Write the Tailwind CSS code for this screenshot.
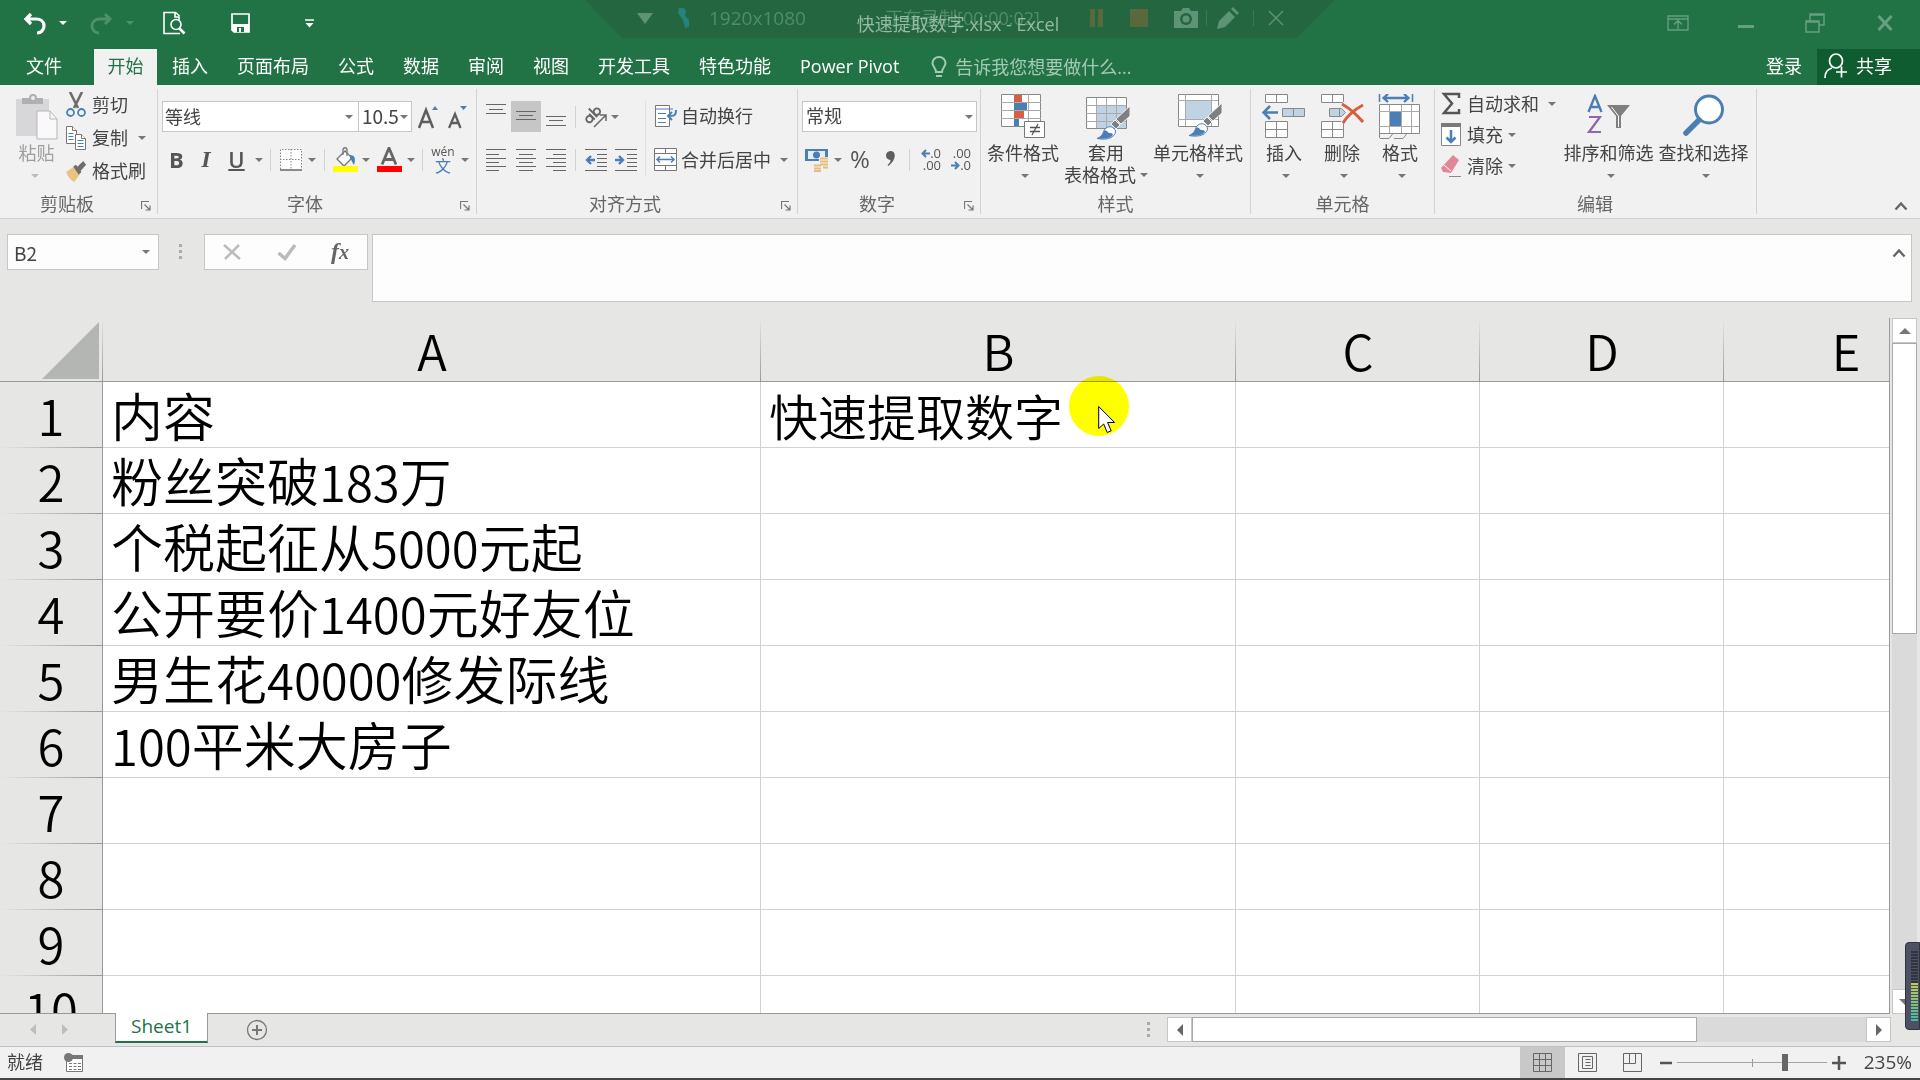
<!DOCTYPE html>
<html lang="zh-CN">
<head>
<meta charset="utf-8">
<title>快速提取数字.xlsx - Excel</title>
<script src="https://cdn.jsdelivr.net/npm/@tailwindcss/browser@4"></script>
</head>
<body class="flex h-screen flex-col overflow-hidden bg-[#e6e6e5] font-['Open_Sans','Noto_Sans_CJK_SC',sans-serif] text-lg leading-5 text-[#444]">

<!-- shared symbols -->
<svg class="hidden">
  <symbol id="dn" viewBox="0 0 8 4"><path d="M0 0h8L4 4z" fill="currentColor"/></symbol>
  <symbol id="launch" viewBox="0 0 10 10"><path d="M.5 8V.5H8M3.5 3.5l5 5M9 4.5V9H4.5" fill="none" stroke="#777" stroke-width="1.2"/></symbol>
  <symbol id="brush" viewBox="0 0 34 34"><path d="M34 0v10l-9 8-5-5z" fill="#7f7f7f" stroke="#f1f1f1"/><path d="M19 14l5 5-4 4-5-5z" fill="#7f7f7f" stroke="#f1f1f1"/><path d="M1 32.500c5-2 6-5 7-8 2-4 7-5 10-2s1 7-3 9c-4 2-9 2-14 1z" fill="#fff" stroke="#4a7fb5"/><path d="M1 32.500c5-2 6-5 7-8 2 0 3 0 4 2 2 1 4 0 5 2-1 3-7 5-16 4z" fill="#4a7fb5"/></symbol>
</svg>

<!-- title bar -->
<header class="relative flex h-[49px] shrink-0 items-start bg-[#217346] text-white">
  <nav class="flex items-center pt-[11px] pl-[23px]" aria-label="快速访问工具栏">
    <button aria-label="撤消" class="w-6"><svg viewBox="0 0 24 24" class="size-6"><path d="M8 3L3 8l5 5M3 8h10c5 0 8 3 8 7s-3 7-7 7" fill="none" stroke="#fff" stroke-width="3.2"/></svg></button>
    <button aria-label="撤消列表" class="ml-[12px]"><svg class="h-1 w-2"><use href="#dn"/></svg></button>
    <button aria-label="重做" class="ml-[22px] w-6 text-[#4d9069]"><svg viewBox="0 0 24 24" class="size-6"><path d="M16 3l5 5-5 5M21 8H11c-5 0-8 3-8 7s3 7 7 7" fill="none" stroke="currentColor" stroke-width="3"/></svg></button>
    <button aria-label="重做列表" class="ml-[13px] text-[#4d9069]"><svg class="h-1 w-2"><use href="#dn"/></svg></button>
    <button aria-label="打印预览" class="ml-[28px]"><svg viewBox="0 0 24 24" class="size-6" fill="none" stroke="#fff" stroke-width="1.6"><path d="M17 5v-.5L13.500 1.500H2v21h16M13 2v4h4v3"/><circle cx="14" cy="13.500" r="5"/><path d="M17.500 17.500l5 5" stroke-width="2.600"/></svg></button>
    <button aria-label="保存" class="ml-[44px]"><svg viewBox="0 0 22 22" class="size-[22px]"><path d="M2 2h17v18H4l-2-2z" fill="none" stroke="#fff" stroke-width="1.700"/><path d="M2 12h17v8H4l-2-2z" fill="#fff"/><path d="M7 15h7v5H7z" fill="#217346"/><path d="M9 16h2v4H9z" fill="#fff"/></svg></button>
    <button aria-label="自定义快速访问工具栏" class="ml-[53px]"><svg viewBox="0 0 9 9" class="size-[9px]"><path d="M0 1h9" stroke="#fff" stroke-width="1.500"/><path d="M.5 4h8L4.500 8.500z" fill="#fff"/></svg></button>
  </nav>

  <!-- screen recorder strip laid over the title -->
  <div class="absolute inset-x-0 top-0 flex justify-center">
    <div class="flex h-[38px] w-[750px] items-center bg-[#24663f] pb-[2px] pl-[52px] text-[#518d69] [clip-path:polygon(0_0,100%_0,712px_100%,37px_100%)]">
      <svg viewBox="0 0 16 11" class="h-[11px] w-4"><path d="M0 0h16L8 11z" fill="#5d9475"/></svg>
      <svg viewBox="0 0 18 20" class="ml-[22px] h-5 w-[18px]"><path d="M4 0h5l2 3-1 5 4 4v7l-4 1-2-8-5-7z" fill="#25837e"/></svg>
      <span class="ml-[16px] w-[176px] text-[19px]">1920x1080</span>
      <span class="w-[200px] whitespace-nowrap">正在录制[00:00:02]</span>
      <svg viewBox="0 0 14 18" class="ml-[5px] h-[18px] w-[14px]"><path d="M0 0h5v18H0zM8 0h5v18H8z" fill="#59693c"/></svg>
      <svg viewBox="0 0 18 18" class="ml-[26px] size-[18px]"><path d="M0 0h18v18H0z" fill="#59693c"/></svg>
      <svg viewBox="0 0 24 20" class="ml-[26px] h-5 w-6"><path d="M7 3l2-3h6l2 3h7v17H0V3z" fill="#5d9475"/><circle cx="12" cy="11" r="6" fill="#24663f"/><circle cx="12" cy="11" r="3.500" fill="#5d9475"/></svg>
      <i class="ml-[8px] h-4 w-px bg-[#3b7a56]"></i>
      <svg viewBox="0 0 22 22" class="ml-[10px] size-[22px]"><path d="M0 22l2-8L12 4l6 6L8 20zM14 2l2-2 6 6-2 2z" fill="#5d9475"/></svg>
      <i class="ml-[14px] h-4 w-px bg-[#3b7a56]"></i>
      <svg viewBox="0 0 16 16" class="ml-[14px] size-4"><path d="M1 1l14 14M15 1L1 15" stroke="#5d9475" stroke-width="1.400"/></svg>
    </div>
  </div>
  <h1 class="absolute inset-x-0 top-[14px] pr-1 text-center text-[#94bba3]">快速提取数字.xlsx - Excel</h1>

  <div class="relative ml-auto flex items-center pt-[12px] pr-[27px] text-[#67a080]">
    <button aria-label="功能区显示选项"><svg viewBox="0 0 22 16" class="h-4 w-[22px]" fill="none" stroke="currentColor" stroke-width="1.300"><path d="M1 1h20v14H1zM1 4h20M11 14V6M7 9.500l4-4 4 4"/></svg></button>
    <button aria-label="最小化" class="ml-[49px] pt-2"><svg viewBox="0 0 16 4" class="h-1 w-4"><path d="M0 0h16v3H0z" fill="currentColor"/></svg></button>
    <button aria-label="还原" class="ml-[51px]"><svg viewBox="0 0 20 22" class="h-[22px] w-5" fill="none" stroke="currentColor" stroke-width="1.500"><path d="M1 9h13v11H1zM1 10h13M5 9V2h14v11h-5M5 3h14"/></svg></button>
    <button aria-label="关闭" class="ml-[52px]"><svg viewBox="0 0 16 16" class="size-4"><path d="M1.500 1l13 14M14.500 1l-13 14" stroke="currentColor" stroke-width="3"/></svg></button>
  </div>
</header>

<!-- ribbon tabs -->
<nav class="flex h-9 shrink-0 items-center bg-[#217346] pl-[26px] whitespace-nowrap text-white">
  <a href="#" class="w-[68px] pb-[2px]">文件</a>
  <a href="#" class="flex h-9 w-[63px] items-center justify-center bg-[#f1f1f1] pb-[2px] text-[#217346]">开始</a>
  <div class="ml-[15px] flex gap-[29px] pb-[2px]">
    <a href="#">插入</a><a href="#">页面布局</a><a href="#">公式</a><a href="#">数据</a><a href="#">审阅</a><a href="#">视图</a><a href="#">开发工具</a><a href="#">特色功能</a><a href="#">Power Pivot</a>
  </div>
  <button class="ml-[32px] flex items-center gap-2 text-[#a5cab4]">
    <svg viewBox="0 0 16 22" class="h-[22px] w-4" fill="none" stroke="currentColor" stroke-width="2"><path d="M5 16c0-4-3.500-5-3.500-9a6.500 6 0 0 1 13 0c0 4-3.500 5-3.500 9zM5 20h6"/></svg>
    <span>告诉我您想要做什么...</span>
  </button>
  <a href="#" class="ml-auto pb-[2px]">登录</a>
  <button class="ml-[15px] flex h-9 w-[103px] items-center gap-2 bg-[#0e5c2f] pb-[2px] pl-[7px]">
    <svg viewBox="0 0 24 26" class="h-[26px] w-6" fill="none" stroke="#fff" stroke-width="1.700"><ellipse cx="12" cy="8" rx="6.500" ry="7"/><path d="M1 25c0-6 3-9 7-10M12 19h11M17.500 13.500v11"/></svg>
    <span>共享</span>
  </button>
</nav>

<!-- ribbon -->
<section class="flex h-[134px] shrink-0 border-b border-[#cfcfcf] bg-[#f1f1f1] whitespace-nowrap">

  <div class="my-1 flex w-[158px] shrink-0 flex-col border-r border-[#d2d2d2]">
    <div class="flex h-[105px] pl-[15px]">
      <button class="flex w-[43px] flex-col pt-[5px] text-[#9e9e9e]">
        <svg viewBox="0 0 43 46" class="h-[46px] w-[43px]"><path d="M1 5h33v37H1z" fill="#d7d7d9"/><path d="M7 4h7a4 4 0 0 1 8 0h6v6H7z" fill="#b0b0b2"/><circle cx="18" cy="4" r="2" fill="#eee"/><path d="M22 17h13l7 8v20H22z" fill="#faf8fa" stroke="#b5b5b5"/><path d="M35 17v8h7" fill="none" stroke="#b5b5b5"/></svg>
        <span class="mt-[3px]">粘贴</span>
        <svg class="mt-[11px] ml-4 h-1 w-2 text-[#bbb]"><use href="#dn"/></svg>
      </button>
      <div class="ml-2 flex flex-col gap-[13px] pt-[6px]">
        <button class="flex h-5 items-center gap-[6px]"><svg viewBox="0 0 20 26" class="h-[26px] w-5" fill="none"><path d="M4 0l8 16M16 0L8 16" stroke="#6d6d6d" stroke-width="2.600"/><circle cx="4.500" cy="20.500" r="3.500" stroke="#4a7fb5" stroke-width="1.800"/><circle cx="15.500" cy="20.500" r="3.500" stroke="#4a7fb5" stroke-width="1.800"/></svg>剪切</button>
        <button class="flex h-5 items-center gap-[6px]"><svg viewBox="0 0 20 26" class="h-[26px] w-5" fill="#fff" stroke="#777"><path d="M.5 1.500h6l4 4v13H.5z"/><path d="M6.500 1.500v4h4" /><path d="M9.500 9.500h6l4 4v11h-10z"/><path d="M15.500 9.500v4h4"/><path d="M2.500 8.500h5M2.500 11.500h5M2.500 14.500h5M11.500 15.500h6M11.500 18.500h6M11.500 21.500h6" stroke="#4a7fb5"/></svg>复制<svg class="ml-1 h-1 w-2 text-[#777]"><use href="#dn"/></svg></button>
        <button class="flex h-5 items-center gap-[6px]"><svg viewBox="0 0 22 24" class="h-6 w-5 overflow-visible"><path d="M0 13l9-6 6 9-6 8c-4-2-7-6-9-11z" fill="#eac282"/><path d="M8 7l3-2 6 8-3 3z" fill="#6d6d6d"/><path d="M12 8l7-7 3 4-6 7z" fill="#6d6d6d"/></svg>格式刷</button>
      </div>
    </div>
    <div class="flex items-center pl-10 text-[#666]"><span>剪贴板</span><button aria-label="剪贴板设置" class="ml-auto pt-1 pr-[6px]"><svg class="size-[10px]"><use href="#launch"/></svg></button></div>
  </div>

  <div class="my-1 flex w-[319px] shrink-0 flex-col border-r border-[#d2d2d2] pl-1">
    <div class="flex h-[105px] flex-col gap-[12px] pt-3">
      <div class="flex h-[31px] items-stretch font-['Noto_Sans_CJK_SC',sans-serif]">
        <label class="relative flex w-[197px]"><select aria-label="字体" class="w-full appearance-none border border-[#c6c6c6] bg-white pb-[2px] pl-[2px] text-[#444]"><option>等线</option></select><svg class="absolute top-[14px] right-[6px] h-1 w-2 text-[#777]"><use href="#dn"/></svg></label>
        <label class="relative -ml-px flex w-[54px]"><select aria-label="字号" class="w-full appearance-none border border-[#c6c6c6] bg-white pb-[2px] pl-[3px] text-[19px] text-[#444]"><option>10.5</option></select><svg class="absolute top-[14px] right-1 h-1 w-2 text-[#777]"><use href="#dn"/></svg></label>
        <button aria-label="增大字号" class="ml-[6px]"><svg viewBox="0 0 22 28" class="h-7 w-[22px]"><path d="M1 25L8 7l7 18M3.500 19h9" fill="none" stroke="#5e5e5e" stroke-width="2.500"/><path d="M14 7l3-4 3 4z" fill="#4a7fb5"/></svg></button>
        <button aria-label="减小字号" class="ml-2"><svg viewBox="0 0 22 28" class="h-7 w-[22px]"><path d="M1 25l6-14 5.500 14M3 20h8" fill="none" stroke="#5e5e5e" stroke-width="2.300"/><path d="M12 3h7l-3.500 4z" fill="#4a7fb5"/></svg></button>
      </div>
      <div class="flex h-8 items-center text-[#777]">
        <button class="ml-[7px] w-[15px] pb-[2px] text-[22px] font-bold text-[#555]" aria-label="加粗">B</button>
        <button class="ml-[15px] w-[14px] pb-[2px] font-['Liberation_Serif',serif] text-2xl font-bold text-[#555] italic" aria-label="倾斜">I</button>
        <button class="ml-[15px] w-[17px] pb-[2px] text-[22px] font-semibold text-[#555] underline decoration-2" aria-label="下划线">U</button>
        <svg class="ml-[10px] h-1 w-2"><use href="#dn"/></svg>
        <i class="ml-[7px] h-[22px] w-px bg-[#d2d2d2]"></i>
        <button aria-label="边框" class="ml-[9px]"><svg viewBox="0 0 22 22" class="size-[22px]"><path d="M.5.5h21v21H.5z" fill="#fff"/><path d="M.5 20V.5h21V20M11 0v20M0 10.500h21" fill="none" stroke="#888" stroke-dasharray="1.500 1.500"/><path d="M0 21h22" stroke="#666" stroke-width="1.500"/></svg></button>
        <svg class="ml-[6px] h-1 w-2"><use href="#dn"/></svg>
        <i class="ml-2 h-[22px] w-px bg-[#d2d2d2]"></i>
        <button aria-label="填充颜色" class="ml-2"><svg viewBox="0 0 25 26" class="h-[26px] w-[25px]"><path d="M4 12l8-8 7 7-8 8z" fill="#fff" stroke="#777" stroke-width="1.300"/><path d="M10 8V3c0-3 4-3 4 0v6" fill="none" stroke="#777" stroke-width="1.300"/><path d="M17 8c5 0 6 4 4 10-2-2-2-5-4-7z" fill="#4a7fb5"/><path d="M0 19h25v6H0z" fill="#ff0"/></svg></button>
        <svg class="ml-1 h-1 w-2"><use href="#dn"/></svg>
        <button aria-label="字体颜色" class="ml-[7px]"><svg viewBox="0 0 25 26" class="h-[26px] w-[25px]"><path d="M5 17.500L12 1l7 16.500M7.500 12.500h9" fill="none" stroke="#666" stroke-width="2.800"/><path d="M0 19h25v6H0z" fill="#f00"/></svg></button>
        <svg class="ml-[5px] h-1 w-2"><use href="#dn"/></svg>
        <i class="ml-[7px] h-[22px] w-px bg-[#d2d2d2]"></i>
        <button aria-label="拼音指南" class="ml-[9px] flex w-[22px] flex-col items-center text-xs leading-[11px] text-[#555]"><span>wén</span><span class="text-base leading-[18px] text-[#4a7fb5]">文</span></button>
        <svg class="ml-[7px] h-1 w-2"><use href="#dn"/></svg>
      </div>
    </div>
    <div class="flex items-center pl-[125px] text-[#666]"><span>字体</span><button aria-label="字体设置" class="ml-auto pt-1 pr-[6px]"><svg class="size-[10px]"><use href="#launch"/></svg></button></div>
  </div>

  <div class="my-1 flex w-[321px] shrink-0 flex-col border-r border-[#d2d2d2] pl-1">
    <div class="flex h-[105px] pt-3">
      <div class="flex flex-col gap-[12px]">
        <div class="flex h-[31px] items-center text-[#777]">
          <button aria-label="顶端对齐" class="flex h-full w-[30px] justify-center"><svg viewBox="0 0 20 28" class="h-7 w-5 shrink-0" stroke="#666"><path d="M0 3.500h20M3 8.500h14M0 12.500h20"/></svg></button>
          <button aria-label="垂直居中" class="flex h-full w-[30px] justify-center bg-[#c6c6c6]"><svg viewBox="0 0 20 28" class="h-7 w-5" stroke="#666"><path d="M0 10.500h20M3 14.500h14M0 18.500h20"/></svg></button>
          <button aria-label="底端对齐" class="flex h-full w-[30px] justify-center"><svg viewBox="0 0 20 28" class="h-7 w-5" stroke="#666"><path d="M0 15.500h20M3 19.500h14M0 24.500h20"/></svg></button>
          <i class="ml-1 h-[22px] w-px bg-[#d2d2d2]"></i>
          <button aria-label="方向" class="ml-[9px]"><svg viewBox="0 0 24 24" class="size-6 overflow-visible" fill="none" stroke="#666"><g transform="rotate(-45 8 12)" stroke-width="1.900"><circle cx="4" cy="11" r="3.200"/><path d="M7.500 7v8M11 3v12"/><circle cx="14.500" cy="11" r="3.200"/></g><path d="M9 22L20 11M15 10h6v6" stroke-width="1.500"/></svg></button>
          <svg class="ml-[2px] h-1 w-2"><use href="#dn"/></svg>
        </div>
        <div class="flex h-8 items-center">
          <button aria-label="左对齐" class="flex w-[30px] justify-center"><svg viewBox="0 0 20 22" class="h-[22px] w-5" stroke="#666"><path d="M0 .5h20M0 5.500h13M0 9.500h20M0 13.500h13M0 17.500h20M0 21.500h13"/></svg></button>
          <button aria-label="居中" class="flex w-[30px] justify-center"><svg viewBox="0 0 20 22" class="h-[22px] w-5" stroke="#666"><path d="M0 .5h20M3 5.500h14M0 9.500h20M3 13.500h14M0 17.500h20M3 21.500h14"/></svg></button>
          <button aria-label="右对齐" class="flex w-[30px] justify-center"><svg viewBox="0 0 20 22" class="h-[22px] w-5" stroke="#666"><path d="M0 .5h20M7 5.500h13M0 9.500h20M7 13.500h13M0 17.500h20M7 21.500h13"/></svg></button>
          <i class="ml-1 h-[22px] w-px bg-[#d2d2d2]"></i>
          <button aria-label="减少缩进量" class="ml-[5px] flex w-[30px] justify-center"><svg viewBox="0 0 22 22" class="size-[22px]" stroke="#666"><path d="M0 .5h22M12 5.500h10M12 9.500h10M12 13.500h10M12 17.500h10M0 21.500h22"/><path d="M10 11H2M6 7l-4 4 4 4" fill="none" stroke="#4a7fb5" stroke-width="2.400"/></svg></button>
          <button aria-label="增加缩进量" class="flex w-[30px] justify-center"><svg viewBox="0 0 22 22" class="size-[22px]" stroke="#666"><path d="M0 .5h22M12 5.500h10M12 9.500h10M12 13.500h10M12 17.500h10M0 21.500h22"/><path d="M0 11h8M4 7l4 4-4 4" fill="none" stroke="#4a7fb5" stroke-width="2.400"/></svg></button>
        </div>
      </div>
      <i class="ml-1 h-[75px] w-px bg-[#e0e0e0]"></i>
      <div class="ml-2 flex flex-col gap-[12px]">
        <button class="flex h-[31px] items-center gap-[3px] pb-px"><svg viewBox="0 0 24 24" class="size-6" fill="none"><path d="M1.500 1.500h14v21h-14z" fill="#fff" stroke="#777"/><path d="M1 5h18M4 9.500h8M4 14.500h8M4 18.500h8" stroke="#4a7fb5"/><path d="M22 6c0 6-2 6-8 6M18 8l-4 4 4 4" stroke="#4a7fb5" stroke-width="2"/></svg>自动换行</button>
        <button class="flex h-8 items-center gap-[3px]"><svg viewBox="0 0 24 24" class="size-6" fill="none" stroke="#777"><path d="M.5.5h22v22H.5z" fill="#fff"/><path d="M.5 5.500h22M.5 17.500h22M11.500.5v5M11.500 17.500v5"/><path d="M3 11.500h17M6 8.500l-3 3 3 3M17 8.500l3 3-3 3" stroke="#4a7fb5" stroke-width="1.500"/></svg>合并后居中<svg class="ml-[6px] h-1 w-2 text-[#777]"><use href="#dn"/></svg></button>
      </div>
    </div>
    <div class="flex items-center pl-[108px] text-[#666]"><span>对齐方式</span><button aria-label="对齐设置" class="ml-auto pt-1 pr-[6px]"><svg class="size-[10px]"><use href="#launch"/></svg></button></div>
  </div>

  <div class="my-1 flex w-[183px] shrink-0 flex-col border-r border-[#d2d2d2] pl-1">
    <div class="flex h-[105px] flex-col gap-[12px] pt-3">
      <label class="relative flex h-[31px] w-[175px]"><select aria-label="数字格式" class="w-full appearance-none border border-[#c6c6c6] bg-white pb-px pl-[3px] text-[#444]"><option>常规</option></select><svg class="absolute top-[14px] right-1 h-1 w-2 text-[#777]"><use href="#dn"/></svg></label>
      <div class="flex h-8 items-center text-[#777]">
        <button aria-label="会计数字格式" class="ml-[3px]"><svg viewBox="0 0 24 24" class="size-6"><path d="M0 1h23v12H0z" fill="#4a7fb5"/><path d="M3 3h17v8H3z" fill="#e5edf5"/><circle cx="11.500" cy="7" r="3.500" fill="#4a7fb5"/><path d="M14 9h9v12h-6v3H8v-8h6z" fill="#f1f1f1"/><path d="M15 10.500h8M15 13.500h8M15 16.500h8M9 17.500h7M9 20.500h7M9 23h7M18 19.500h5" stroke="#e5bd7c" stroke-width="2"/></svg></button>
        <svg class="ml-[5px] h-1 w-2"><use href="#dn"/></svg>
        <button aria-label="百分比样式" class="ml-[7px] w-[22px] pb-[2px] text-2xl text-[#555]">%</button>
        <button aria-label="千位分隔样式" class="ml-[14px] pb-[2px]"><svg viewBox="0 0 10 16" class="h-4 w-[11px]"><path d="M5 0c6 0 6 9-2 15l-1-1c2-2 3-3 3-5-6 0-6-9 0-9z" fill="#5e5e5e"/></svg></button>
        <i class="ml-[13px] h-[22px] w-px bg-[#d2d2d2]"></i>
        <button aria-label="增加小数位数" class="ml-[9px] flex w-[22px] flex-col items-end pb-[2px] text-[13px] leading-3 text-[#555]"><span class="flex items-center"><svg viewBox="0 0 9 9" class="size-[9px]"><path d="M9 4.500H2M5 1L1.500 4.500 5 8" fill="none" stroke="#4a7fb5" stroke-width="2"/></svg>.0</span><span>.00</span></button>
        <button aria-label="减少小数位数" class="ml-2 flex w-[22px] flex-col items-end pb-[2px] text-[13px] leading-3 text-[#555]"><span>.00</span><span class="flex items-center"><svg viewBox="0 0 9 9" class="size-[9px]"><path d="M0 4.500h7M4 1l3.500 3.500L4 8" fill="none" stroke="#4a7fb5" stroke-width="2"/></svg>.0</span></button>
      </div>
    </div>
    <div class="flex items-center pl-[57px] text-[#666]"><span>数字</span><button aria-label="数字设置" class="ml-auto pt-1 pr-[6px]"><svg class="size-[10px]"><use href="#launch"/></svg></button></div>
  </div>

  <div class="my-1 flex w-[270px] shrink-0 flex-col border-r border-[#d2d2d2]">
    <div class="flex h-[105px] pl-[3px]">
      <button class="flex w-[78px] flex-col items-center pt-[5px]">
        <svg viewBox="0 0 46 46" class="h-[46px] w-[46px]"><path d="M1.500.5h39v32h-39z" fill="#fff" stroke="#888"/><path d="M1 8.500h40M1 16.500h40M1 24.500h40M14.500 0v32M28.500 0v32" stroke="#aaa" fill="none"/><path d="M14 1h8v7h-8zM14 17h10v7H14z" fill="#d65f42"/><path d="M14 9h13v7H14zM14 25h5v7h-5z" fill="#4a7fb5"/><path d="M24.500 27.500h20v16h-20z" fill="#fff" stroke="#777"/><path d="M30 33.500h10M30 37.500h10M38 30l-6 11" stroke="#555" stroke-width="1.300"/></svg>
        <span class="mt-[3px]">条件格式</span>
        <svg class="mt-[11px] ml-1 h-1 w-2 text-[#777]"><use href="#dn"/></svg>
      </button>
      <button class="flex w-[88px] flex-col items-center pt-[5px]">
        <svg viewBox="0 0 46 46" class="ml-[6px] h-[46px] w-[46px]"><path d="M.5 3.500h40v31H.5z" fill="#fff"/><path d="M11 12h29v22H11z" fill="#bfd3e5"/><path d="M.5 3.500h40v31H.5z" fill="none" stroke="#888"/><path d="M0 11.500h40M0 19.500h40M0 27.500h40M10.500 4v30M20.500 4v30M30.500 4v30" stroke="#aaa"/><use href="#brush" x="10" y="12" width="34" height="34"/></svg>
        <span class="mt-[3px]">套用</span>
        <span class="mt-[2px] flex items-center gap-1">表格格式<svg class="h-1 w-2 text-[#777]"><use href="#dn"/></svg></span>
      </button>
      <button class="flex w-[96px] flex-col items-center pt-[5px]">
        <svg viewBox="0 0 46 46" class="ml-[6px] h-[46px] w-[46px]"><path d="M.5.500h40v32H.5z" fill="#fff" stroke="#888"/><path d="M7.500 0v32M33.500 0v32M0 6.500h40M0 25.500h40" stroke="#aaa"/><path d="M8 7h25v18H8z" fill="#bfd3e5"/><use href="#brush" x="10" y="9" width="34" height="34"/></svg>
        <span class="mt-[3px]">单元格样式</span>
        <svg class="mt-[11px] ml-1 h-1 w-2 text-[#777]"><use href="#dn"/></svg>
      </button>
    </div>
    <div class="text-center text-[#666]">样式</div>
  </div>

  <div class="my-1 flex w-[184px] shrink-0 flex-col border-r border-[#d2d2d2]">
    <div class="flex h-[105px] pl-1">
      <button class="flex w-[58px] flex-col items-center pt-[5px]">
        <svg viewBox="0 0 44 46" class="h-[46px] w-11" fill="#fff" stroke="#888"><path d="M3.500.500h22v8h-22zM14.500.500v8M3.500 27.500h22v16h-22zM14.500 27.500v16M3.500 35.500h22"/><path d="M20.500 14.500h22v8h-22zM31.500 14.500v8" fill="#bfd3e5"/><path d="M16 18.500H2M8 12l-6.500 6.500L8 25" fill="none" stroke="#4a7fb5" stroke-width="2.600"/></svg>
        <span class="mt-[3px]">插入</span><svg class="mt-[11px] ml-1 h-1 w-2 text-[#777]"><use href="#dn"/></svg>
      </button>
      <button class="flex w-[58px] flex-col items-center pt-[5px]">
        <svg viewBox="0 0 44 46" class="h-[46px] w-11" fill="#fff" stroke="#888"><path d="M1.500.500h22v8h-22zM12.500.500v8M1.500 27.500h22v16h-22zM12.500 27.500v16M1.500 35.500h22"/><path d="M9.500 14.500h12l4 4-4 4h-12zM19.500 14.500v8" fill="#bfd3e5"/><path d="M22 10c7 4 15 11 21 18M43 11c-9 5-16 11-20 18" fill="none" stroke="#f1f1f1" stroke-width="5"/><path d="M22 10c7 4 15 11 21 18M43 11c-9 5-16 11-20 18" fill="none" stroke="#d65f42" stroke-width="3"/></svg>
        <span class="mt-[3px]">删除</span><svg class="mt-[11px] ml-1 h-1 w-2 text-[#777]"><use href="#dn"/></svg>
      </button>
      <button class="flex w-[58px] flex-col items-center pt-[5px]">
        <svg viewBox="0 0 44 46" class="h-[46px] w-11"><path d="M1.500 10.500h40v29h-40z" fill="#fff" stroke="#888"/><path d="M1 17.500h40M1 32.500h40M11.500 11v28M23.500 11v28M33.500 11v28" stroke="#aaa"/><path d="M12 18h11v14H12z" fill="#4a7fb5"/><path d="M1.500 44V39M2 44.500h9l4-5M16 44.500h9l4-5" fill="none" stroke="#888"/><path d="M1.500 0v8M34.500 0v8" stroke="#4a7fb5" stroke-width="1.500"/><path d="M6 4h24M10 0L5.500 4l4.500 4M26 0l4.500 4L26 8" fill="none" stroke="#4a7fb5" stroke-width="2.300"/></svg>
        <span class="mt-[3px]">格式</span><svg class="mt-[11px] ml-1 h-1 w-2 text-[#777]"><use href="#dn"/></svg>
      </button>
    </div>
    <div class="text-center text-[#666]">单元格</div>
  </div>

  <div class="my-1 flex w-[322px] shrink-0 flex-col border-r border-[#d2d2d2]">
    <div class="flex h-[105px] pl-[6px]">
      <div class="flex w-[120px] flex-col">
        <button class="flex h-[31px] items-center gap-[6px] pb-[2px]"><svg viewBox="0 0 20 24" class="h-6 w-5"><path d="M18 6V2H3l8 9.500L3 21h15v-4" fill="none" stroke="#555" stroke-width="2.500"/></svg>自动求和<svg class="ml-[3px] h-1 w-2 shrink-0 text-[#777]"><use href="#dn"/></svg></button>
        <button class="flex h-[31px] items-center gap-[6px] pb-[2px]"><svg viewBox="0 0 20 24" class="h-6 w-5"><path d="M.5 1h19v21.500H.5z" fill="#fff" stroke="#888"/><path d="M0 0h20v4H0z" fill="#7a7a7a"/><path d="M10 7v12M5.500 14.500L10 19l4.500-4.500" fill="none" stroke="#4a7fb5" stroke-width="2.500"/></svg>填充<svg class="-ml-px h-1 w-2 text-[#777]"><use href="#dn"/></svg></button>
        <button class="flex h-[31px] items-center gap-[6px] pb-[2px]"><svg viewBox="0 0 20 24" class="h-6 w-5"><path d="M12 1l6 5-8 13-8-1-2-4z" fill="#e4869a"/><path d="M3 11l7 6" stroke="#fff"/><path d="M8 22.500h12" stroke="#888"/></svg>清除<svg class="-ml-px h-1 w-2 text-[#777]"><use href="#dn"/></svg></button>
      </div>
      <button class="flex w-[95px] flex-col items-center pt-[5px]">
        <svg viewBox="0 0 44 46" class="h-[46px] w-11" fill="none"><path d="M1.500 18L8 2l6.500 16M4 13h8" stroke="#4a7fb5" stroke-width="2.400"/><path d="M2 23h11L2 38h12" stroke="#9163b0" stroke-width="2.200"/><path d="M20 11h23l-9 11v12h-5V22z" fill="#7f7f7f"/><path d="M31.500 33V22l-7-9" stroke="#fff"/></svg>
        <span class="mt-[3px]">排序和筛选</span><svg class="mt-[11px] ml-1 h-1 w-2 text-[#777]"><use href="#dn"/></svg>
      </button>
      <button class="flex w-[95px] flex-col items-center pt-[5px]">
        <svg viewBox="0 0 44 46" class="h-[46px] w-11"><circle cx="27" cy="15.500" r="13.500" fill="#fff" stroke="#4a7fb5" stroke-width="3"/><path d="M17 26L4 39" stroke="#4a7fb5" stroke-width="5.500" stroke-linecap="round"/></svg>
        <span class="mt-[3px]">查找和选择</span><svg class="mt-[11px] ml-1 h-1 w-2 text-[#777]"><use href="#dn"/></svg>
      </button>
    </div>
    <div class="pl-[142px] text-[#666]">编辑</div>
  </div>
  <button aria-label="折叠功能区" class="mt-auto mr-3 mb-[7px] ml-auto"><svg viewBox="0 0 14 10" class="h-[10px] w-[14px]"><path d="M1.500 8.500L7 2.500l5.500 6" fill="none" stroke="#666" stroke-width="2.400"/></svg></button>
</section>

<!-- formula bar -->
<section class="flex h-[99px] shrink-0 items-start pt-[15px] pr-2 pl-[7px]">
  <div class="relative w-[152px]">
    <input aria-label="名称框" value="B2" class="h-9 w-full border border-[#c6c6c6] bg-[#fdfdfd] pl-[6px] font-['Noto_Sans_CJK_SC',sans-serif] text-[19px] text-[#444]">
    <svg class="absolute top-4 right-[9px] h-1 w-2 text-[#777]"><use href="#dn"/></svg>
  </div>
  <svg viewBox="0 0 3 16" class="mt-[10px] ml-5 h-4 w-[3px]"><path d="M0 0h3v3H0zM0 6h3v3H0zM0 12h3v3H0z" fill="#aaa"/></svg>
  <div class="ml-[22px] flex h-9 w-[164px] items-center border border-[#c6c6c6] bg-[#fdfdfd] pl-[18px]">
    <button aria-label="取消"><svg viewBox="0 0 18 18" class="size-[18px]"><path d="M1 2l16 14M16 2L2 16" stroke="#bbb" stroke-width="2.500"/></svg></button>
    <button aria-label="输入" class="ml-9"><svg viewBox="0 0 20 18" class="h-[18px] w-5"><path d="M1.500 10L8 15.500 18 2" fill="none" stroke="#bbb" stroke-width="3.500"/></svg></button>
    <button aria-label="插入函数" class="ml-[34px] pb-[2px] font-['Liberation_Serif',serif] text-2xl font-bold text-[#666] italic"><span>f</span><span class="text-xl">x</span></button>
  </div>
  <div class="relative ml-1 flex flex-1">
    <textarea aria-label="编辑栏" class="h-[68px] w-full resize-none border border-[#c6c6c6] bg-[#fdfdfd]"></textarea>
    <svg viewBox="0 0 14 10" class="absolute top-[14px] right-[6px] h-[10px] w-[14px]"><path d="M1.500 8.500L7 2.500l5.500 6" fill="none" stroke="#666" stroke-width="2.400"/></svg>
  </div>
</section>

<!-- worksheet -->
<main class="relative flex min-h-0 flex-1">
  <div class="min-w-0 flex-1 overflow-hidden border-r border-b border-[#999] bg-white">
    <table class="w-[1968px] table-fixed border-separate border-spacing-0 font-['Noto_Sans_CJK_SC',sans-serif] text-[52px] leading-[56px] font-[350] text-black [&_tbody_th]:h-[66px] [&_tbody_th]:border-r [&_tbody_th]:border-[#999] [&_tbody_th]:bg-[#e6e6e5] [&_tbody_th]:bg-[linear-gradient(to_right,#e6e6e5,#999)] [&_tbody_th]:bg-[length:100%_1px] [&_tbody_th]:bg-bottom [&_tbody_th]:bg-no-repeat [&_tbody_th]:p-0 [&_tbody_th]:text-[49px] [&_tbody_th]:font-[350] [&_td]:border-r [&_td]:border-b [&_td]:border-[#d2d2d2] [&_td]:p-0 [&_td]:pl-[8px] [&_td]:whitespace-nowrap [&_thead_th]:h-[64px] [&_thead_th]:border-b [&_thead_th]:border-[#999] [&_thead_th]:bg-[#e6e6e5] [&_thead_th]:bg-[linear-gradient(to_bottom,#e6e6e5,#999)] [&_thead_th]:bg-[length:1px_100%] [&_thead_th]:bg-right [&_thead_th]:bg-no-repeat [&_thead_th]:p-0 [&_thead_th]:text-[49px] [&_thead_th]:font-[350]">
      <colgroup><col class="w-[103px]"><col class="w-[658px]"><col class="w-[475px]"><col class="w-[244px]"><col class="w-[244px]"><col class="w-[244px]"></colgroup>
      <thead><tr>
        <th aria-label="全选"><svg viewBox="0 0 58 58" class="ml-[42px] size-[58px]"><path d="M57 1v57H0z" fill="#b4b6b4"/></svg></th>
        <th>A</th><th>B</th><th>C</th><th>D</th><th>E</th>
      </tr></thead>
      <tbody>
        <tr><th>1</th><td>内容</td><td class="text-[49px]">快速提取数字</td><td></td><td></td><td></td></tr>
        <tr><th>2</th><td>粉丝突破<span class="text-[49px]">183</span>万</td><td></td><td></td><td></td><td></td></tr>
        <tr><th>3</th><td>个税起征从<span class="text-[49px]">5000</span>元起</td><td></td><td></td><td></td><td></td></tr>
        <tr><th>4</th><td>公开要价<span class="text-[49px]">1400</span>元好友位</td><td></td><td></td><td></td><td></td></tr>
        <tr><th>5</th><td>男生花<span class="text-[49px]">40000</span>修发际线</td><td></td><td></td><td></td><td></td></tr>
        <tr><th>6</th><td><span class="text-[49px]">100</span>平米大房子</td><td></td><td></td><td></td><td></td></tr>
        <tr><th>7</th><td></td><td></td><td></td><td></td><td></td></tr>
        <tr><th>8</th><td></td><td></td><td></td><td></td><td></td></tr>
        <tr><th>9</th><td></td><td></td><td></td><td></td><td></td></tr>
        <tr><th>10</th><td></td><td></td><td></td><td></td><td></td></tr>
      </tbody>
    </table>
  </div>
  <div class="flex w-[30px] shrink-0 flex-col pl-[2px]">
    <div class="flex h-full w-[25px] flex-col bg-[#dadada]">
      <button aria-label="向上滚动" class="flex h-[25px] shrink-0 items-center justify-center border border-[#c6c6c6] bg-white"><svg viewBox="0 0 12 6" class="h-[6px] w-3"><path d="M0 6h12L6 0z" fill="#777"/></svg></button>
      <div class="h-[291px] border border-[#aaa] bg-white"></div>
      <button aria-label="向下滚动" class="mt-auto flex h-[25px] shrink-0 items-center justify-center border border-[#c6c6c6] bg-white"><svg viewBox="0 0 12 6" class="h-[6px] w-3"><path d="M0 0h12L6 6z" fill="#777"/></svg></button>
    </div>
  </div>

  <!-- pointer highlight -->
  <div class="absolute top-[58px] left-[1069px] size-[60px] rounded-full bg-[#ff0] mix-blend-multiply"></div>
  <svg viewBox="0 0 19 29" class="absolute top-[87px] left-[1098px] h-[29px] w-[19px]"><path d="M.7 1.500v22l5-4.500 3.500 8.500 4-1.700-3.600-8.300h7z" fill="#fff" stroke="#000"/></svg>

  <!-- recorder level meter -->
  <div class="absolute right-0 -bottom-4 z-10 flex h-[88px] w-[15px] flex-col rounded-l border border-[#30343f] bg-[#4c5163] py-2 pl-[5px]">
    <div class="h-[32px] w-[7px] bg-[repeating-linear-gradient(to_bottom,#30343f_0_2px,#4c5163_2px_3px)]"></div>
    <div class="relative h-[38px] w-[7px] bg-[linear-gradient(to_bottom,#c9c854,#7fc37a_50%,#44b8a8)]"><div class="h-full bg-[repeating-linear-gradient(to_bottom,transparent_0_2px,#4c5163_2px_3px)]"></div></div>
  </div>
</main>

<!-- sheet tabs and horizontal scroll bar -->
<footer class="flex h-[33px] shrink-0 items-start border-b border-[#c0c0c0] pl-[30px]">
  <button aria-label="上一工作表" class="mt-[10px]"><svg viewBox="0 0 6 11" class="h-[11px] w-[6px]"><path d="M6 0v11L0 5.500z" fill="#bdbdbd"/></svg></button>
  <button aria-label="下一工作表" class="mt-[10px] ml-[26px]"><svg viewBox="0 0 6 11" class="h-[11px] w-[6px]"><path d="M0 0v11l6-5.500z" fill="#bdbdbd"/></svg></button>
  <a href="#" class="relative z-10 -mt-px ml-[47px] flex h-[30px] w-[93px] items-center justify-center border-x border-b-2 border-x-[#999] border-b-[#217346] bg-white pb-[3px] text-[19px] text-[#217346]">Sheet1</a>
  <button aria-label="新工作表" class="mt-[5px] ml-[38px]"><svg viewBox="0 0 22 22" class="size-[22px]" fill="none" stroke="#777"><circle cx="11" cy="11" r="9.500" stroke-width="1.300"/><path d="M6 11h10M11 6v10" stroke-width="2"/></svg></button>
  <svg viewBox="0 0 3 16" class="mt-2 mr-[17px] ml-auto h-4 w-[3px]"><path d="M0 0h3v3H0zM0 6h3v3H0zM0 12h3v3H0z" fill="#aaa"/></svg>
  <div class="mt-[3px] mr-[29px] flex h-[25px] w-[724px] bg-[#dadada]">
    <button aria-label="向左滚动" class="flex w-[25px] items-center justify-center border border-[#c6c6c6] bg-white"><svg viewBox="0 0 6 12" class="h-3 w-[6px]"><path d="M6 0v12L0 6z" fill="#666"/></svg></button>
    <div class="w-[505px] border border-[#aaa] bg-white"></div>
    <button aria-label="向右滚动" class="ml-auto flex w-[25px] items-center justify-center border border-[#c6c6c6] bg-white"><svg viewBox="0 0 6 12" class="h-3 w-[6px]"><path d="M0 0v12l6-6z" fill="#666"/></svg></button>
  </div>
</footer>

<!-- status bar -->
<footer class="flex h-[33px] shrink-0 items-center border-b-2 border-[#444] bg-[#f1f1f1] pr-2 pl-[7px]">
  <span class="pb-px">就绪</span>
  <button aria-label="录制宏" class="ml-[21px]"><svg viewBox="0 0 20 20" class="size-5"><path d="M2.500 3.500h16v15h-16z" fill="#fff" stroke="#777"/><path d="M8 2h11v4H8z" fill="#777"/><circle cx="4.500" cy="4.500" r="4.500" fill="#777"/><path d="M5 10.500h12M5 13.500h12M5 16.500h12" stroke="#777" stroke-dasharray="3 1.500"/></svg></button>
  <button aria-label="普通视图" class="ml-auto flex h-full w-[45px] items-center justify-center bg-[#c8c8c8]"><svg viewBox="0 0 20 20" class="size-5" fill="none" stroke="#666"><path d="M.5.500h18v18H.5zM.5 6.500h18M.5 12.500h18M6.500.500v18M12.500.500v18"/></svg></button>
  <button aria-label="页面布局视图" class="flex h-full w-[45px] items-center justify-center"><svg viewBox="0 0 20 20" class="size-5" fill="none" stroke="#666"><path d="M.5.500h18v18H.5zM4.500 3.500h10v12h-10zM7.500 6.500h5M7.500 9.500h5M7.500 12.500h5"/></svg></button>
  <button aria-label="分页预览" class="flex h-full w-[45px] items-center justify-center"><svg viewBox="0 0 20 20" class="size-5" fill="none" stroke="#666"><path d="M.5.500h18v18H.5zM.5 10.500h12V.500M6.500.500v10"/></svg></button>
  <button aria-label="缩小" class="ml-[5px]"><svg viewBox="0 0 12 12" class="size-3"><path d="M0 6h12" stroke="#555" stroke-width="2.500"/></svg></button>
  <div class="relative ml-[5px] flex h-full w-[150px] items-center">
    <i class="absolute left-[75px] h-2 w-px bg-[#999]"></i>
    <input type="range" aria-label="显示比例" min="0" max="100" value="73" class="relative h-[18px] w-full appearance-none bg-[linear-gradient(#a5a5a5,#a5a5a5)] bg-[length:100%_1px] bg-center bg-no-repeat [&::-webkit-slider-thumb]:h-[17px] [&::-webkit-slider-thumb]:w-[6px] [&::-webkit-slider-thumb]:appearance-none [&::-webkit-slider-thumb]:bg-[#666]">
  </div>
  <button aria-label="放大" class="ml-[5px]"><svg viewBox="0 0 14 14" class="size-[14px]"><path d="M0 7h14M7 0v14" stroke="#555" stroke-width="2.500"/></svg></button>
  <span class="ml-4 w-[50px] pb-px text-right text-[19px]">235%</span>
</footer>
</body>
</html>
